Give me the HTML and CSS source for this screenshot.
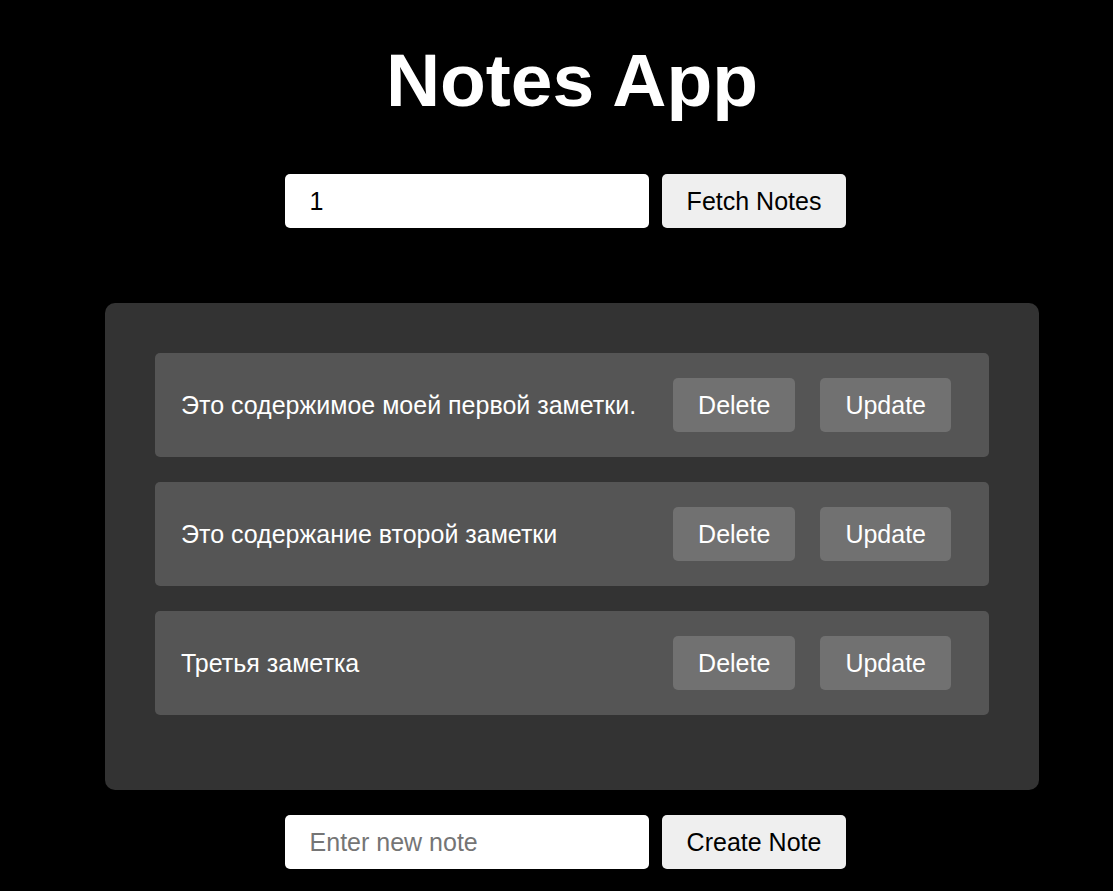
FILE: index.html
```html
<!DOCTYPE html>
<html lang="ru">
<head>
<meta charset="utf-8">
<title>Notes App</title>
<link rel="stylesheet" href="styles.css">
</head>
<body>
<div class="app">
  <h1 class="title">Notes App</h1>
  <div class="row">
    <input class="field" type="text" value="1">
    <button class="btn-light">Fetch Notes</button>
  </div>
  <div class="panel">
    <div class="note">
      <span class="note-text">Это содержимое моей первой заметки.</span>
      <div class="note-actions">
        <button class="btn-dark">Delete</button>
        <button class="btn-dark">Update</button>
      </div>
    </div>
    <div class="note">
      <span class="note-text">Это содержание второй заметки</span>
      <div class="note-actions">
        <button class="btn-dark">Delete</button>
        <button class="btn-dark">Update</button>
      </div>
    </div>
    <div class="note">
      <span class="note-text">Третья заметка</span>
      <div class="note-actions">
        <button class="btn-dark">Delete</button>
        <button class="btn-dark">Update</button>
      </div>
    </div>
  </div>
  <div class="row">
    <input class="field" type="text" placeholder="Enter new note">
    <button class="btn-light">Create Note</button>
  </div>
</div>
</body>
</html>
```

FILE: styles.css
```css
html, body {
  margin: 0;
  padding: 0;
  background: #000;
  font-family: "Liberation Sans", Arial, sans-serif;
  color: #fff;
}

.app {
  width: 934px;
  margin-left: 105px;
  padding-top: 37px;
  display: flex;
  flex-direction: column;
  align-items: center;
}

.title {
  margin: 0 0 50px;
  font-size: 75px;
  line-height: 87px;
  font-weight: bold;
  color: #fff;
}

.row {
  display: flex;
  align-items: center;
  gap: 13px;
  padding-right: 13px;
}

.field {
  box-sizing: border-box;
  width: 364px;
  height: 54px;
  padding: 0 25px;
  border: none;
  border-radius: 5px;
  background: #fff;
  color: #000;
  font-family: inherit;
  font-size: 25px;
  outline: none;
}

.field::placeholder {
  color: #757575;
}

.btn-light {
  box-sizing: border-box;
  height: 54px;
  padding: 0 25px;
  border: none;
  border-radius: 5px;
  background: #efefef;
  color: #000;
  font-family: inherit;
  font-size: 25px;
  cursor: pointer;
}

.panel {
  box-sizing: border-box;
  width: 934px;
  margin: 75px 0 25px;
  padding: 50px 50px 50px;
  background: #333;
  border-radius: 10px;
  display: flex;
  flex-direction: column;
}

.note {
  box-sizing: border-box;
  height: 104px;
  margin-bottom: 25px;
  padding: 0 38px 0 26px;
  background: #555;
  border-radius: 5px;
  display: flex;
  align-items: center;
  justify-content: space-between;
}

.note-text {
  font-size: 25px;
  color: #fff;
}

.note-actions {
  display: flex;
  gap: 25px;
}

.btn-dark {
  box-sizing: border-box;
  height: 54px;
  padding: 0 25px;
  border: none;
  border-radius: 5px;
  background: #717171;
  color: #fff;
  font-family: inherit;
  font-size: 25px;
  cursor: pointer;
}
```
